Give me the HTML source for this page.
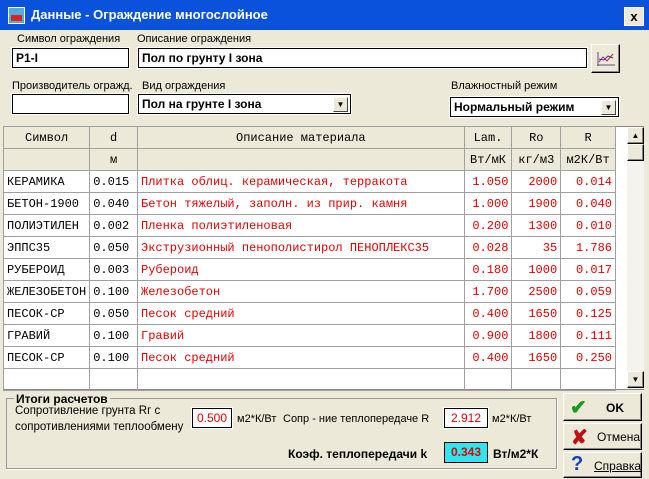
<!DOCTYPE html>
<html><head><meta charset="utf-8"><style>
*{box-sizing:border-box;margin:0;padding:0}
body{width:649px;height:479px;background:#ece9d8;font-family:"Liberation Sans",sans-serif;font-size:11px;position:relative;overflow:hidden}
.a{position:absolute}
.title{left:0;top:0;width:649px;height:30px;background:#0a52dc;border:3px solid #0a52dc;border-bottom:0}
.title span{position:absolute;left:28px;top:4px;color:#fff;font-weight:bold;font-size:13px}
.box{background:#fff;border:1px solid #000;outline:1px solid #fff}
.inp{font-weight:bold;font-size:12px;padding:2px 3px}
.lbl{font-size:11px;color:#000}
table{border-collapse:collapse;font-family:"Liberation Mono",monospace;font-size:12px}
td{border:1px solid #a0a0a0;height:22px;padding:0 3px;white-space:nowrap}
tr.h td{background:#ece9d8;text-align:center}
td.r{text-align:right}
.red{color:#e00000}
.btn{background:#ece9d8;border:1px solid #000;border-top-color:#fff;border-left-color:#fff;box-shadow:inset -1px -1px #888}
.dd{position:absolute;right:2px;top:2px;width:15px;height:15px;background:#ece9d8;border:1px solid #fff;border-right-color:#444;border-bottom-color:#444;font-size:8px;text-align:center;line-height:13px}
</style></head><body>
<div class="a title"><div class="a" style="left:5px;top:4px;width:17px;height:17px;background:#5ad;border:1px solid #fff"><div class="a" style="left:2px;top:7px;width:11px;height:6px;background:#d22"></div></div><span>Данные - Ограждение многослойное</span>
<div class="a" style="right:2px;top:4px;width:20px;height:19px;background:#ece9d8;border:1px solid #fff;font-weight:bold;font-size:13px;text-align:center;line-height:17px">x</div></div>

<div class="a lbl" style="left:17px;top:33px">Символ ограждения</div>
<div class="a lbl" style="left:137px;top:33px">Описание ограждения</div>
<div class="a box inp" style="left:12px;top:48px;width:117px;height:20px">P1-I</div>
<div class="a box inp" style="left:138px;top:48px;width:449px;height:20px">Пол по грунту I зона</div>
<div class="a btn" style="left:591px;top:44px;width:29px;height:29px"><svg width="20" height="16" style="margin:6px 0 0 4px"><path d="M1 14H19M2 1V15" stroke="#557" fill="none"/><path d="M3 11L7 6L11 10L17 3" stroke="#d22" fill="none"/><path d="M3 8L8 9L12 5L17 7" stroke="#33c" fill="none"/></svg></div>

<div class="a lbl" style="left:12px;top:80px">Производитель огражд.</div>
<div class="a lbl" style="left:142px;top:80px">Вид ограждения</div>
<div class="a lbl" style="left:451px;top:80px">Влажностный режим</div>
<div class="a box" style="left:12px;top:94px;width:117px;height:20px"></div>
<div class="a box inp" style="left:138px;top:94px;width:213px;height:20px">Пол на грунте I зона<div class="dd">▼</div></div>
<div class="a box inp" style="left:450px;top:97px;width:169px;height:20px">Нормальный режим<div class="dd">▼</div></div>

<div class="a" style="left:3px;top:126px;width:641px;height:264px;background:#fff;border:1px solid #888"></div>
<table class="a" style="left:3px;top:126px;width:613px">
<colgroup><col style="width:85px"><col style="width:48px"><col style="width:328px"><col style="width:48px"><col style="width:49px"><col style="width:55px"></colgroup>
<tr class="h"><td>Символ</td><td>d</td><td>Описание материала</td><td>Lam.</td><td>Ro</td><td>R</td></tr>
<tr class="h"><td></td><td>м</td><td></td><td class="r">Вт/мК</td><td class="r">кг/м3</td><td class="r">м2К/Вт</td></tr>
<tr><td>КЕРАМИКА</td><td>0.015</td><td class="red">Плитка облиц. керамическая, терракота</td><td class="r red">1.050</td><td class="r red">2000</td><td class="r red">0.014</td></tr>
<tr><td>БЕТОН-1900</td><td>0.040</td><td class="red">Бетон тяжелый, заполн. из прир. камня</td><td class="r red">1.000</td><td class="r red">1900</td><td class="r red">0.040</td></tr>
<tr><td>ПОЛИЭТИЛЕН</td><td>0.002</td><td class="red">Пленка полиэтиленовая</td><td class="r red">0.200</td><td class="r red">1300</td><td class="r red">0.010</td></tr>
<tr><td>ЭППС35</td><td>0.050</td><td class="red">Экструзионный пенополистирол ПЕНОПЛЕКС35</td><td class="r red">0.028</td><td class="r red">35</td><td class="r red">1.786</td></tr>
<tr><td>РУБЕРОИД</td><td>0.003</td><td class="red">Рубероид</td><td class="r red">0.180</td><td class="r red">1000</td><td class="r red">0.017</td></tr>
<tr><td>ЖЕЛЕЗОБЕТОН</td><td>0.100</td><td class="red">Железобетон</td><td class="r red">1.700</td><td class="r red">2500</td><td class="r red">0.059</td></tr>
<tr><td>ПЕСОК-СР</td><td>0.050</td><td class="red">Песок средний</td><td class="r red">0.400</td><td class="r red">1650</td><td class="r red">0.125</td></tr>
<tr><td>ГРАВИЙ</td><td>0.100</td><td class="red">Гравий</td><td class="r red">0.900</td><td class="r red">1800</td><td class="r red">0.111</td></tr>
<tr><td>ПЕСОК-СР</td><td>0.100</td><td class="red">Песок средний</td><td class="r red">0.400</td><td class="r red">1650</td><td class="r red">0.250</td></tr>
<tr><td style="height:20px"></td><td></td><td></td><td></td><td></td><td></td></tr>
</table>
<div class="a" style="left:627px;top:127px;width:17px;height:262px;background:#f4f3ee"></div>
<div class="a btn" style="left:627px;top:127px;width:17px;height:17px;font-size:8px;text-align:center;line-height:15px">▲</div>
<div class="a btn" style="left:627px;top:144px;width:17px;height:17px"></div>
<div class="a btn" style="left:627px;top:371px;width:17px;height:17px;font-size:8px;text-align:center;line-height:15px">▼</div>

<div class="a" style="left:6px;top:398px;width:551px;height:71px;border:1px solid #999;box-shadow:1px 1px #fff"></div>
<div class="a" style="left:14px;top:392px;background:#ece9d8;font-weight:bold;font-size:12px;padding:0 2px">Итоги расчетов</div>
<div class="a lbl" style="left:15px;top:403px;line-height:16px;font-size:11.5px">Сопротивление грунта Rг с<br>сопротивлениями теплообмену</div>
<div class="a box" style="left:192px;top:408px;width:40px;height:20px;color:#e00000;text-align:center;line-height:18px;font-size:12px">0.500</div>
<div class="a lbl" style="left:237px;top:413px">м2*К/Вт</div>
<div class="a lbl" style="left:283px;top:413px">Сопр - ние теплопередаче R</div>
<div class="a box" style="left:444px;top:408px;width:44px;height:20px;color:#e00000;text-align:center;line-height:18px;font-size:12px">2.912</div>
<div class="a lbl" style="left:492px;top:413px">м2*К/Вт</div>
<div class="a" style="left:288px;top:447px;font-weight:bold;font-size:12px">Коэф. теплопередачи k</div>
<div class="a" style="left:444px;top:442px;width:44px;height:21px;background:#2ee6f0;border:1px solid #000;color:#e00000;text-align:center;line-height:19px;font-size:12px;font-weight:bold">0.343</div>
<div class="a" style="left:493px;top:447px;font-weight:bold;font-size:12px">Вт/м2*К</div>

<div class="a btn" style="left:563px;top:393px;width:79px;height:28px"><span class="a" style="left:6px;top:1px;color:#1a9a1a;font-size:20px;font-weight:bold">✔</span><span class="a" style="left:42px;top:7px;font-weight:bold;font-size:12px">OK</span></div>
<div class="a btn" style="left:563px;top:423px;width:79px;height:27px"><span class="a" style="left:7px;top:1px;color:#c01010;font-size:20px;font-weight:bold">✘</span><span class="a" style="left:33px;top:6px;font-size:12px">Отмена</span></div>
<div class="a btn" style="left:563px;top:452px;width:79px;height:26px"><span class="a" style="left:7px;top:0px;color:#1040c0;font-size:20px;font-weight:bold">?</span><span class="a" style="left:30px;top:6px;font-size:12px;text-decoration:underline">Справка</span></div>
</body></html>
